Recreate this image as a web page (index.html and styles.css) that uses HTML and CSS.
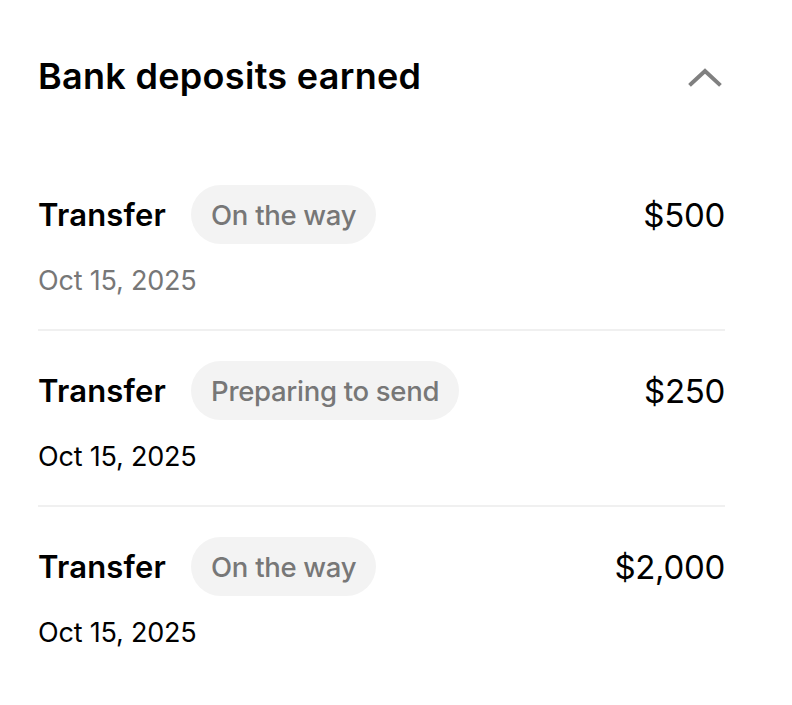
FILE: index.html
```html
<!DOCTYPE html>
<html>
<head>
<meta charset="utf-8">
<link rel="stylesheet" href="styles.css">
</head>
<body>
<div class="panel">
  <div class="header">
    <h1 class="title">Bank deposits earned</h1>
    <svg class="chevron" width="34" height="20" viewBox="0 0 34 20"><path d="M3 17 L17 4 L31 17" fill="none" stroke="#808080" stroke-width="4" stroke-linecap="square"/></svg>
  </div>
  <div class="row">
    <div class="row-top">
      <span class="label">Transfer</span>
      <span class="pill">On the way</span>
      <span class="amount">$500</span>
    </div>
    <div class="date muted">Oct 15, 2025</div>
  </div>
  <div class="row">
    <div class="row-top">
      <span class="label">Transfer</span>
      <span class="pill">Preparing to send</span>
      <span class="amount">$250</span>
    </div>
    <div class="date">Oct 15, 2025</div>
  </div>
  <div class="row last">
    <div class="row-top">
      <span class="label">Transfer</span>
      <span class="pill">On the way</span>
      <span class="amount">$2,000</span>
    </div>
    <div class="date">Oct 15, 2025</div>
  </div>
</div>
</body>
</html>
```
FILE: styles.css
```css
html, body {
  margin: 0;
  background: #fff;
}
body {
  font-family: Inter, "Noto Sans", sans-serif;
  color: #000;
}
.panel {
  width: 687px;
  padding: 0 67px 0 38px;
}
.header {
  display: flex;
  align-items: center;
  justify-content: space-between;
  padding-top: 54px;
  height: 44px;
  margin-bottom: 57px;
}
.title {
  margin: 0;
  font-size: 36px;
  font-weight: 600;
  line-height: 44px;
  letter-spacing: 0.3px;
}
.chevron {
  margin-right: 3px;
  margin-top: 2px;
}
.row {
  padding: 30px 0 31px;
  border-bottom: 2px solid #f0f0f0;
}
.row:first-of-type { padding-top: 0; }
.row.last { border-bottom: none; }
.row-top {
  display: flex;
  align-items: center;
  height: 59px;
}
.label {
  font-size: 31px;
  font-weight: 600;
  letter-spacing: 0.2px;
}
.pill {
  margin-left: 25px;
  height: 59px;
  padding: 0 20px;
  display: flex;
  align-items: center;
  background: #f3f3f3;
  border-radius: 30px;
  color: #777;
  font-size: 27.5px;
  font-weight: 500;
  letter-spacing: -0.3px;
}
.amount {
  margin-left: auto;
  font-size: 33px;
  font-weight: 400;
  letter-spacing: -0.3px;
}
.date {
  margin-top: 20px;
  font-size: 27px;
  line-height: 34px;
  letter-spacing: -0.2px;
}
.date.muted { color: #777; }
```
